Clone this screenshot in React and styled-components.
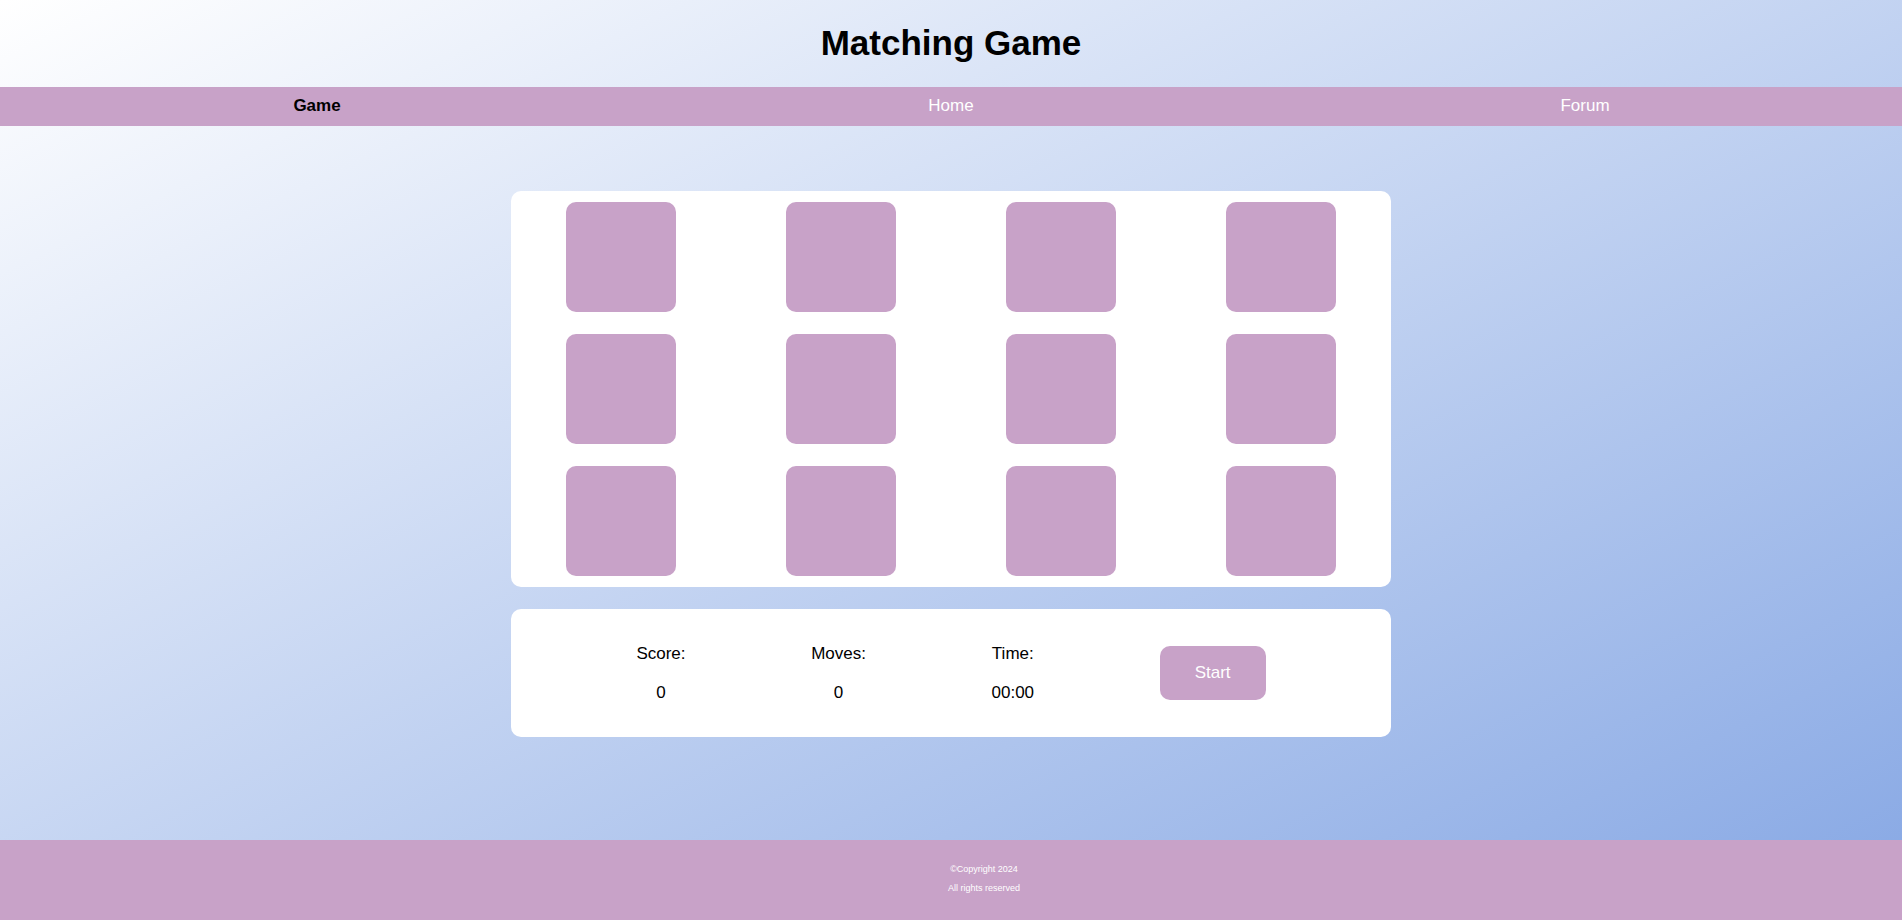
import React from "react";
import styled, { createGlobalStyle } from "styled-components";

const GlobalStyle = createGlobalStyle`
  html, body {
    margin: 0;
    padding: 0;
  }
  body {
    font-family: "Liberation Sans", Arial, sans-serif;
    background: linear-gradient(to bottom right, #ffffff, rgb(134, 167, 228));
    min-height: 100vh;
  }
`;

const Page = styled.div`
  display: flex;
  flex-direction: column;
  min-height: 100vh;
`;

const Header = styled.header`
  text-align: center;
`;

const Title = styled.h1`
  margin: 0;
  padding: 23px 0 24px;
  font-size: 35px;
  line-height: 40px;
  font-weight: 700;
  color: #000;
`;

const Nav = styled.nav`
  display: flex;
  background: #c8a2c8;
  height: 39px;
  box-sizing: border-box;
  padding-top: 9px;
`;

const NavItem = styled.a`
  flex: 1;
  text-align: center;
  font-size: 17px;
  line-height: 19.5px;
  text-decoration: none;
  color: ${(p) => (p.$active ? "#000" : "#fff")};
  font-weight: ${(p) => (p.$active ? 700 : 400)};
  cursor: pointer;
`;

const Main = styled.main`
  flex: 1;
  display: flex;
  flex-direction: column;
  align-items: center;
  gap: 22px;
  padding: 65px 0 40px;
`;

const Card = styled.section`
  width: 880px;
  background: #fff;
  border-radius: 10px;
  box-sizing: border-box;
`;

const Board = styled(Card)`
  display: grid;
  grid-template-columns: repeat(4, 1fr);
  justify-items: center;
  row-gap: 22px;
  padding: 11px 0;
`;

const Tile = styled.div`
  width: 110px;
  height: 110px;
  border-radius: 10px;
  background: #c8a2c8;
  cursor: pointer;
`;

const Stats = styled(Card)`
  height: 128px;
  display: flex;
  align-items: center;
  justify-content: center;
  gap: 125.6px;
`;

const Stat = styled.div`
  display: flex;
  flex-direction: column;
  align-items: center;
  gap: 19px;
  font-size: 17px;
  line-height: 19.5px;
  color: #000;
`;

const StatText = styled.span`
  display: block;
`;

const StartButton = styled.button`
  font-family: inherit;
  font-size: 17px;
  line-height: 19.5px;
  padding: 17px 35px;
  border: none;
  border-radius: 10px;
  background: #c8a2c8;
  color: #fff;
  cursor: pointer;
`;

const Footer = styled.footer`
  background: #c8a2c8;
  height: 80px;
  box-sizing: border-box;
  padding: 24px 0 0 66px;
  display: flex;
  flex-direction: column;
  align-items: center;
  gap: 9px;
`;

const FooterLine = styled.p`
  margin: 0;
  font-size: 9px;
  line-height: 10.35px;
  color: #fff;
`;

const stats = [
  { label: "Score:", value: "0" },
  { label: "Moves:", value: "0" },
  { label: "Time:", value: "00:00" },
];

export default function App() {
  return (
    <>
      <GlobalStyle />
      <Page>
        <Header>
          <Title>Matching Game</Title>
        </Header>
        <Nav>
          <NavItem $active>Game</NavItem>
          <NavItem>Home</NavItem>
          <NavItem>Forum</NavItem>
        </Nav>
        <Main>
          <Board>
            {Array.from({ length: 12 }).map((_, i) => (
              <Tile key={i} />
            ))}
          </Board>
          <Stats>
            {stats.map((s) => (
              <Stat key={s.label}>
                <StatText>{s.label}</StatText>
                <StatText>{s.value}</StatText>
              </Stat>
            ))}
            <StartButton>Start</StartButton>
          </Stats>
        </Main>
        <Footer>
          <FooterLine>©Copyright 2024</FooterLine>
          <FooterLine>All rights reserved</FooterLine>
        </Footer>
      </Page>
    </>
  );
}
